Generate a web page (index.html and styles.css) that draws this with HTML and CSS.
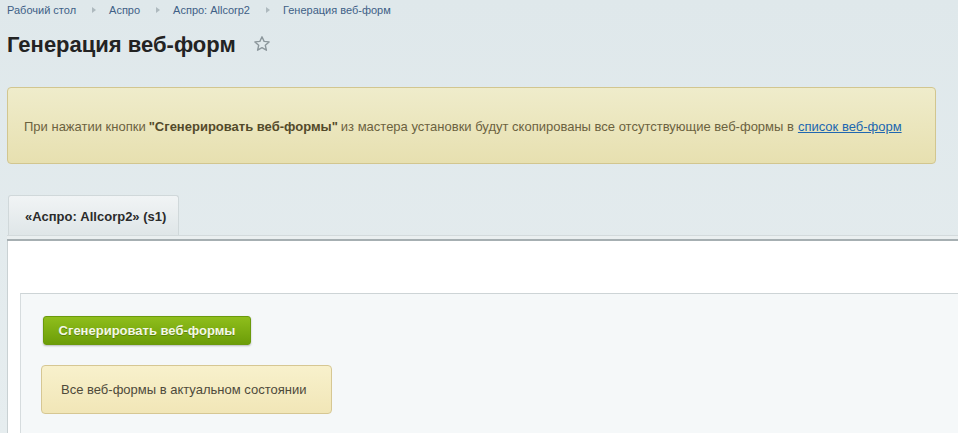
FILE: index.html
```html
<!DOCTYPE html>
<html lang="ru">
<head>
<meta charset="utf-8">
<title>Генерация веб-форм</title>
<link rel="stylesheet" href="styles.css">
</head>
<body>
<div class="page">
  <nav class="crumbs">
    <a class="crumb" href="#">Рабочий стол</a><span class="sep"></span>
    <a class="crumb" href="#">Аспро</a><span class="sep"></span>
    <a class="crumb" href="#">Аспро: Allcorp2</a><span class="sep"></span>
    <span class="crumb">Генерация веб-форм</span>
  </nav>
  <div class="title-row">
    <h1 class="title">Генерация веб-форм</h1>
    <svg class="star" width="18" height="18" viewBox="0 0 18 18"><path d="M9 1.8l2.1 4.6 5 .5-3.8 3.4 1.1 4.9L9 12.7l-4.4 2.5 1.1-4.9L1.9 6.9l5-.5z" fill="none" stroke="#8c979c" stroke-width="1.4" stroke-linejoin="round"/></svg>
  </div>
  <div class="note">
    При нажатии кнопки <b>"Сгенерировать веб-формы"</b> из мастера установки будут скопированы все отсутствующие веб-формы в <a href="#">список веб-форм</a>
  </div>
  <div class="tabs">
    <div class="tab">«Аспро: Allcorp2» (s1)</div>
  </div>
  <div class="tab-line"></div>
  <div class="content">
    <div class="panel">
      <button class="btn" type="button">Сгенерировать веб-формы</button>
      <div class="msg">Все веб-формы в актуальном состоянии</div>
    </div>
  </div>
</div>
</body>
</html>
```
FILE: styles.css
```css
html, body {
  margin: 0;
  padding: 0;
  height: 100%;
}
body {
  background: linear-gradient(#dfe8eb, #e6edef);
  font-family: "Liberation Sans", Arial, sans-serif;
  overflow: hidden;
}
.page {
  padding-left: 7px;
}
.crumbs {
  display: flex;
  align-items: center;
  height: 19px;
  font-size: 11px;
}
.crumb {
  color: #3e5f86;
  text-decoration: none;
}
.sep {
  width: 0;
  height: 0;
  border-top: 3px solid transparent;
  border-bottom: 3px solid transparent;
  border-left: 4px solid #aeb9be;
  margin: 0 13px 0 16px;
}
.title-row {
  display: flex;
  align-items: center;
  height: 31px;
  margin-top: 10px;
}
.title {
  margin: 0;
  font-size: 22px;
  font-weight: bold;
  color: #232323;
}
.star {
  margin-left: 17px;
  margin-top: -1px;
}
.note {
  margin-top: 27px;
  margin-right: 22px;
  height: 73px;
  border: 1px solid #d2c68f;
  border-radius: 4px;
  background: linear-gradient(#efeccb, #e7e0b0);
  display: flex;
  align-items: center;
  padding: 2px 0 0 16px;
  font-size: 13px;
  color: #6b623f;
  white-space: nowrap;
}
.note b {
  color: #534a2a;
  margin: 0 3px;
}
.note a {
  color: #2067b0;
  text-decoration: underline;
  margin-left: 4px;
}
.tabs {
  display: flex;
  margin-top: 31px;
  padding-left: 1px;
}
.tab {
  width: 171px;
  height: 40px;
  box-sizing: border-box;
  border: 1px solid #d0d8da;
  border-bottom: none;
  border-radius: 3px 3px 0 0;
  background: linear-gradient(#f1f4f5, #dfe6e8);
  font-size: 13px;
  font-weight: bold;
  color: #2b2b2b;
  padding: 13px 0 0 16px;
}
.tab-line {
  height: 3px;
  border-top: 1px solid #d3dadc;
  border-bottom: 2px solid #a6afb2;
  background: #eaeff0;
}
.content {
  background: #fff;
  border-left: 1px solid #c9d1d3;
  padding: 52px 0 0 12px;
  height: 140px;
}
.panel {
  background: #f5f8f9;
  border-top: 1px solid #cdd4d6;
  border-left: 1px solid #d6dcde;
  height: 117px;
  padding: 22px 0 0 20px;
}
.btn {
  display: block;
  width: 208px;
  height: 29px;
  margin-left: 2px;
  border: 1px solid #6b9a0c;
  border-radius: 3px;
  background: linear-gradient(#8fbe1c, #6c9d08);
  box-shadow: 0 1px 2px rgba(0, 0, 0, 0.25);
  color: #f4f8e6;
  font-family: "Liberation Sans", Arial, sans-serif;
  font-size: 13px;
  font-weight: bold;
  text-shadow: 0 1px 0 rgba(60, 90, 0, 0.5);
  cursor: pointer;
  padding: 0 0 1px 0;
}
.msg {
  margin-top: 20px;
  width: 291px;
  height: 49px;
  box-sizing: border-box;
  border: 1px solid #d6c793;
  border-radius: 4px;
  background: linear-gradient(#f8f1cc, #f1e6b7);
  font-size: 13px;
  color: #4e4a3a;
  display: flex;
  align-items: center;
  padding: 0 0 1px 19px;
}
```
